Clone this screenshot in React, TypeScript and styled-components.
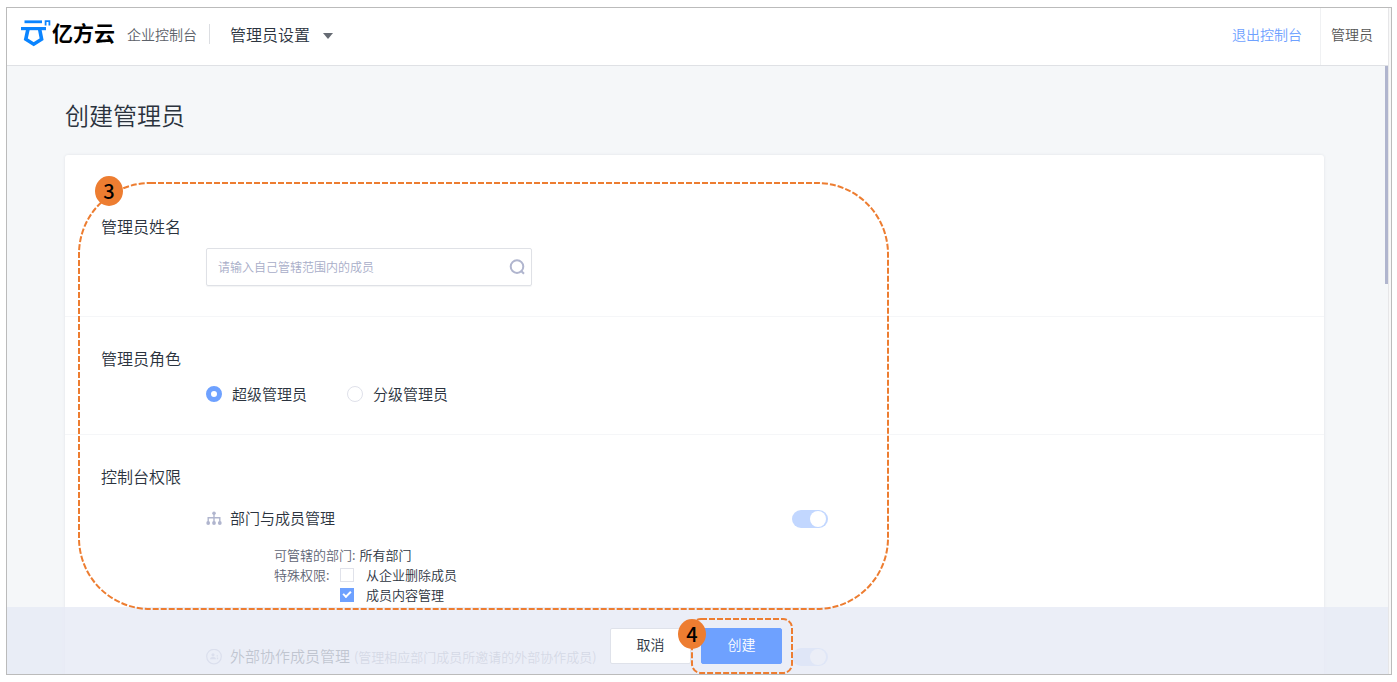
import React from "react";
import styled, { createGlobalStyle } from "styled-components";

const GlobalStyle = createGlobalStyle`
  *, *::before, *::after { box-sizing: border-box; }
  body {
    margin: 0;
    background: #fff;
    color: #2b333e;
    font-family: "Noto Sans CJK SC", "Liberation Sans", sans-serif;
    font-weight: 350;
    font-size: 14px;
  }
  button, input { font: inherit; color: inherit; margin: 0; }
  h1, h2, h3, p, ul { margin: 0; padding: 0; font-weight: inherit; }
`;

const Frame = styled.div`
  display: flex;
  height: calc(100vh - 14px);
  margin: 7px 5px 7px 6px;
  padding-right: 2px;
  border: 1px solid #bbb;
  background: #f8f8f8;
`;

const Shell = styled.div`
  position: relative;
  flex: 1;
  min-width: 0;
  display: flex;
  flex-direction: column;
  overflow: hidden;
  border-right: 1px solid #e6e6e8;
  background: #f5f7f9;
`;

const Header = styled.header`
  flex: none;
  display: flex;
  align-items: stretch;
  height: 58px;
  padding-left: 14px;
  border-bottom: 1px solid #dfe1e5;
  background: #fff;
`;

const HeaderGroup = styled.div`
  display: flex;
  align-items: center;
  padding-bottom: 6px;
`;

const Brand = styled.a`
  display: flex;
  align-items: center;
  gap: 1px;
  color: #000;
  font-size: 21px;
  font-weight: 700;
  line-height: 24px;
  text-decoration: none;
`;

const Wordmark = styled.span`
  padding-bottom: 4px;
`;

const Product = styled.span`
  margin-left: 12px;
  color: #5c6169;
`;

const Rule = styled.span`
  width: 1px;
  height: 20px;
  margin: 0 20px 0 12px;
  background: #dcdee2;
`;

const MenuButton = styled.button`
  display: flex;
  align-items: center;
  gap: 13px;
  padding: 0;
  border: 0;
  background: none;
  font-size: 16px;
`;

const Caret = styled.span`
  margin-top: 4px;
  border: 5px solid transparent;
  border-top: 6px solid #666b73;
  border-bottom: 0;
`;

const ExitLink = styled.a`
  display: flex;
  align-items: center;
  margin-left: auto;
  padding: 0 18px 6px;
  color: #6ea1ff;
  text-decoration: none;
`;

const UserName = styled.div`
  display: flex;
  align-items: center;
  padding: 0 15px 6px 10px;
  border-left: 1px solid #f0f1f3;
  color: #555;
`;

const Body = styled.main`
  flex: 1;
  min-height: 0;
  overflow: hidden;
  padding: 30px 64px 0 58px;
`;

const ScrollThumb = styled.div`
  position: absolute;
  top: 58px;
  right: 0;
  width: 3px;
  height: 218px;
  background: #b0b5ce;
`;

const Title = styled.h1`
  font-size: 24px;
  line-height: 38px;
`;

const Card = styled.form`
  position: relative;
  margin-top: 21px;
  padding-top: 30px;
  border-radius: 3px;
  background: #fff;
  box-shadow: 0 0 3px rgba(40, 50, 80, 0.1);
`;

const Section = styled.section`
  padding: 30px 36px 26px;
  & + & { border-top: 1px solid #f5f6f8; }
`;

const SectionTitle = styled.h2`
  margin-bottom: 11px;
  font-size: 16px;
  line-height: 22px;
`;

const Content = styled.div`
  max-width: 727px;
  padding-left: 105px;
`;

const SearchBox = styled.div`
  display: flex;
  align-items: center;
  width: 326px;
  height: 38px;
  margin-bottom: 4px;
  padding: 0 5px 0 11px;
  border: 1px solid #dfe1e6;
  border-radius: 2px;
  box-shadow: 0 1px 1px #f3f4f6;
`;

const SearchInput = styled.input`
  flex: 1;
  min-width: 0;
  padding: 0 0 2px;
  border: 0;
  outline: 0;
  font-size: 12px;
  &::placeholder { color: #a8adc8; opacity: 1; }
`;

const IconButton = styled.button`
  display: flex;
  padding: 0;
  border: 0;
  background: none;
`;

const RadioGroup = styled.div`
  display: flex;
  gap: 40px;
`;

const RadioLabel = styled.label`
  display: flex;
  align-items: center;
  gap: 10px;
  font-size: 15px;
  line-height: 28px;
`;

const Radio = styled.input`
  appearance: none;
  width: 16px;
  height: 16px;
  border: 1px solid #dfe1ea;
  border-radius: 50%;
  background: #fff;
  &:checked { border: 5px solid #6ea1ff; }
`;

const ModuleRow = styled.div`
  display: flex;
  align-items: center;
  height: 42px;
  font-size: 15px;
`;

const ModuleName = styled.h3`
  margin-left: 8px;
  padding-bottom: 3px;
  font-size: 15px;
`;

const ModuleNote = styled.span`
  margin-left: 4px;
  padding-bottom: 2px;
  color: #8f94a6;
  font-size: 13px;
`;

const Switch = styled.input`
  appearance: none;
  display: flex;
  align-items: center;
  justify-content: flex-end;
  width: 36px;
  height: 18px;
  margin-left: auto;
  padding-right: 2px;
  border-radius: 9px;
  background: #c2d7ff;
  &::after {
    content: "";
    width: 16px;
    height: 16px;
    border-radius: 50%;
    background: #fff;
  }
`;

const Details = styled.div`
  margin: 5px 0 31px 68px;
  font-size: 13px;
  line-height: 20px;
`;

const DetailRow = styled.div`
  display: flex;
`;

const DetailLabel = styled.span`
  min-width: 66px;
  padding-right: 4px;
  color: #5f6575;
`;

const CheckLabel = styled.label`
  display: flex;
  align-items: center;
  gap: 12px;
`;

const Check = styled.input`
  appearance: none;
  display: flex;
  align-items: center;
  justify-content: center;
  width: 14px;
  height: 14px;
  border: 1px solid #e0e2ea;
  background: #fff;
  &:checked { border-color: #6ea1ff; background: #6ea1ff; }
  &:checked::after {
    content: "";
    width: 8px;
    height: 5px;
    margin-bottom: 3px;
    border: solid #fff;
    border-width: 0 0 2px 2px;
    transform: rotate(-45deg);
  }
`;

const ActionBar = styled.footer`
  position: absolute;
  z-index: 1;
  right: 0;
  bottom: 0;
  left: 0;
  display: flex;
  justify-content: center;
  gap: 10px;
  padding: 21px 3px 10px 0;
  background: rgba(230, 234, 245, 0.8);
`;

const Action = styled.button<{ $primary?: boolean }>`
  width: 81px;
  height: 36px;
  padding: 0 0 4px;
  border: 1px solid ${(p) => (p.$primary ? "#6ea1ff" : "#dfe2ea")};
  border-radius: 2px;
  background: ${(p) => (p.$primary ? "#6ea1ff" : "#fff")};
  color: ${(p) => (p.$primary ? "#fff" : "#2b333e")};
`;

const ActionSlot = styled.div`
  position: relative;
`;

const Callout = styled.div<{ $top: number; $left: number; $width: number; $height: number }>`
  position: absolute;
  z-index: 2;
  top: ${(p) => p.$top}px;
  left: ${(p) => p.$left}px;
  width: ${(p) => p.$width}px;
  height: ${(p) => p.$height}px;
  pointer-events: none;
  svg { display: block; }
`;

const Badge = styled.span<{ $top: number; $left: number }>`
  position: absolute;
  top: ${(p) => p.$top}px;
  left: ${(p) => p.$left}px;
  width: 28px;
  height: 30px;
  border-radius: 50%;
  background: #ed7d31;
  color: #000;
  font-size: 20px;
  font-weight: 500;
  line-height: 30px;
  text-align: center;
`;

function DashedBox({ width, height, radius }: { width: number; height: number; radius: number }) {
  return (
    <svg width={width} height={height} aria-hidden="true">
      <rect
        x="1" y="1" width={width - 2} height={height - 2} rx={radius}
        fill="none" stroke="#ed7d31" strokeWidth="2" strokeDasharray="6 2"
      />
    </svg>
  );
}

function LogoMark() {
  return (
    <svg width="30" height="28" viewBox="0 0 30 28" aria-hidden="true" fill="none" stroke="#0a84ff">
      <path d="M3.5 1.8H21" strokeWidth="2.8" />
      <path d="M0 8.6H25" strokeWidth="3.2" />
      <path d="M24.6 5.4V1.2H28.4V5.4" strokeWidth="1.8" />
      <path d="M7 9L4.8 19.2L12.7 24.2L20.6 19.2L18.6 9" strokeWidth="3.6" />
    </svg>
  );
}

function SearchIcon() {
  return (
    <svg width="17" height="17" viewBox="0 0 17 17" aria-hidden="true" fill="none" stroke="#b0b5ce" strokeWidth="2">
      <circle cx="8" cy="7.6" r="6.3" />
      <path d="M12.2 12L15 14.8" />
    </svg>
  );
}

function OrgIcon() {
  return (
    <svg width="16" height="16" viewBox="0 0 16 16" aria-hidden="true" fill="#b0b5ce">
      <circle cx="8" cy="2.2" r="1.8" />
      <circle cx="2.2" cy="12" r="1.9" />
      <circle cx="8" cy="12" r="1.9" />
      <circle cx="13.8" cy="12" r="1.9" />
      <path d="M8 3V12M2.2 12V6.8H13.8V12" fill="none" stroke="#b0b5ce" strokeWidth="1.4" />
    </svg>
  );
}

function PartnerIcon() {
  return (
    <svg width="16" height="16" viewBox="0 0 16 16" aria-hidden="true" fill="#b0b5ce">
      <circle cx="8" cy="7.6" r="7.3" fill="none" stroke="#b0b5ce" strokeWidth="1.2" />
      <circle cx="7" cy="5.8" r="1.6" />
      <path d="M4 10.2C4 8.4 5.4 8 7 8S10 8.4 10 10.2Z" />
      <path d="M10.6 6.2H12V7.5H10.6ZM10.8 8.5H12.2V10.2H10.8Z" />
    </svg>
  );
}

export default function App() {
  return (
    <>
      <GlobalStyle />
      <Frame>
        <Shell>
          <Header>
            <HeaderGroup>
              <Brand href="#"><LogoMark /><Wordmark>亿方云</Wordmark></Brand>
              <Product>企业控制台</Product>
              <Rule />
              <MenuButton type="button">管理员设置<Caret /></MenuButton>
            </HeaderGroup>
            <ExitLink href="#">退出控制台</ExitLink>
            <UserName>管理员</UserName>
          </Header>

          <Body>
            <Title>创建管理员</Title>
            <Card>
              <Section>
                <SectionTitle id="name-title">管理员姓名</SectionTitle>
                <Content>
                  <SearchBox>
                    <SearchInput aria-labelledby="name-title" placeholder="请输入自己管辖范围内的成员" />
                    <IconButton type="button" aria-label="搜索"><SearchIcon /></IconButton>
                  </SearchBox>
                </Content>
              </Section>

              <Section>
                <SectionTitle id="role-title">管理员角色</SectionTitle>
                <Content>
                  <RadioGroup role="radiogroup" aria-labelledby="role-title">
                    <RadioLabel><Radio type="radio" name="role" defaultChecked />超级管理员</RadioLabel>
                    <RadioLabel><Radio type="radio" name="role" />分级管理员</RadioLabel>
                  </RadioGroup>
                </Content>
              </Section>

              <Section>
                <SectionTitle>控制台权限</SectionTitle>
                <Content>
                  <ModuleRow>
                    <OrgIcon />
                    <ModuleName id="members">部门与成员管理</ModuleName>
                    <Switch type="checkbox" role="switch" aria-labelledby="members" defaultChecked />
                  </ModuleRow>
                  <Details>
                    <DetailRow><DetailLabel>可管辖的部门:</DetailLabel>所有部门</DetailRow>
                    <DetailRow>
                      <DetailLabel>特殊权限:</DetailLabel>
                      <div>
                        <CheckLabel><Check type="checkbox" />从企业删除成员</CheckLabel>
                        <CheckLabel><Check type="checkbox" defaultChecked />成员内容管理</CheckLabel>
                      </div>
                    </DetailRow>
                  </Details>
                  <ModuleRow>
                    <PartnerIcon />
                    <ModuleName id="partners">外部协作成员管理</ModuleName>
                    <ModuleNote>(管理相应部门成员所邀请的外部协作成员)</ModuleNote>
                    <Switch type="checkbox" role="switch" aria-labelledby="partners" defaultChecked />
                  </ModuleRow>
                </Content>
              </Section>

              <Callout $top={27} $left={13} $width={811} $height={428}>
                <DashedBox width={811} height={428} radius={71} />
                <Badge $top={-6} $left={17}>3</Badge>
              </Callout>
            </Card>
          </Body>

          <ScrollThumb />

          <ActionBar>
            <Action type="button">取消</Action>
            <ActionSlot>
              <Action type="button" $primary>创建</Action>
              <Callout $top={-10} $left={-10} $width={102} $height={56}>
                <DashedBox width={102} height={56} radius={9} />
                <Badge $top={1} $left={-13}>4</Badge>
              </Callout>
            </ActionSlot>
          </ActionBar>
        </Shell>
      </Frame>
    </>
  );
}
